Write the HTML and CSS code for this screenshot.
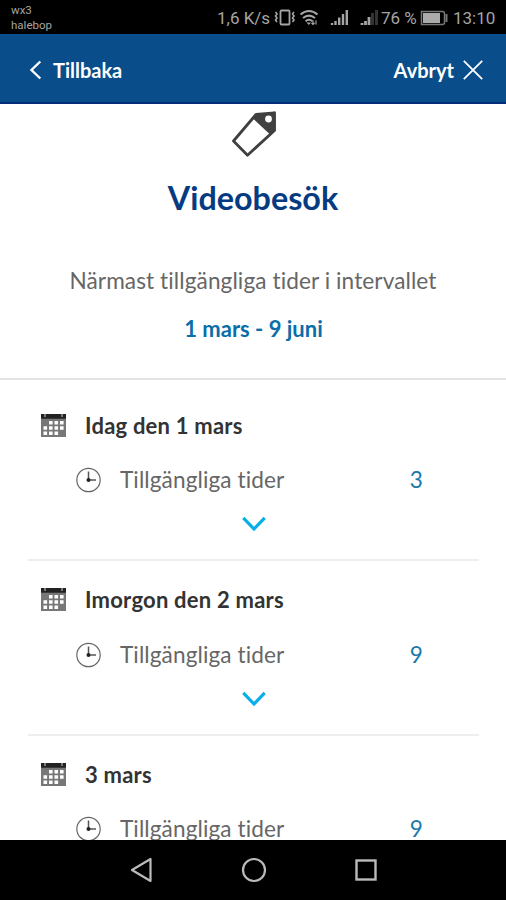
FILE: index.html
```
<!DOCTYPE html>
<html lang="sv">
<head>
<meta charset="utf-8">
<title>Videobesök</title>
<link rel="stylesheet" href="styles.css">
</head>
<body>
<svg class="defs" width="0" height="0">
  <symbol id="calendar" viewBox="0 0 25 23">
    <rect width="25" height="23" fill="#777"/>
    <rect width="25" height="4.7" fill="#222"/>
    <path d="M4 0v3M21 0v3" stroke="#999" stroke-width="1.5"/>
    <path d="M8 7h3.600v3.500H8zM13.500 7h3.600v3.500h-3.600zM19 7h3.600v3.500H19zM2.500 12.200h3.600v3.500H2.500zM8 12.200h3.600v3.500H8zM13.500 12.200h3.600v3.500h-3.600zM19 12.200h3.600v3.500H19zM2.500 17.400h3.600v3.500H2.500zM8 17.400h3.600v3.500H8zM13.500 17.400h3.600v3.500h-3.600z" fill="#fff"/>
  </symbol>
  <symbol id="clock" viewBox="0 0 26 26">
    <circle cx="13.500" cy="13" r="11.700" fill="none" stroke="#666" stroke-width="1.200"/>
    <path d="M13.500 4.500V13h7.500" fill="none" stroke="#555" stroke-width="1.500"/>
    <circle cx="13.500" cy="13" r="2" fill="#222"/>
  </symbol>
  <symbol id="chevron" viewBox="0 0 26 16">
    <path d="M2.300 1.800L13 13 23.700 1.800" fill="none" stroke="#08aee9" stroke-width="3.200"/>
  </symbol>
</svg>
<div class="screen">
  <div class="status">
    <div class="carrier">wx3<br>halebop</div>
    <span class="speed">1,6 K/s</span>
    <svg class="signals" width="105" height="22" viewBox="274 7 105 22" fill="none" stroke="#a5a5a5">
      <rect x="280.500" y="10.500" width="9" height="14" rx="1" stroke-width="1.800"/>
      <path d="M275.500 12l1.500 2-1.500 2 1.500 2-1.500 2 1.500 2M294 12l-1.500 2 1.500 2-1.500 2 1.500 2-1.500 2" stroke-width="1.600"/>
      <path d="M300.500 14.500q8.500-7 17 0M303 18q6-4.800 12 0M305.500 21.200q3.500-3 7 0" stroke-width="2"/>
      <path d="M306.500 22.500h4.500l-2.200 2.500z" fill="#a5a5a5" stroke="none"/>
      <path d="M313 20.500v4M311.500 23l1.500 1.500 1.500-1.500M316 24.500v-4" stroke-width="1.200"/>
      <path d="M332 25v-2M335.500 25v-4M339.200 25v-7.500M343 25v-11M346.800 25V10" stroke-width="2.400"/>
      <path d="M362 25v-2M365.500 25v-4M369 25v-8" stroke-width="2.800"/>
      <path d="M372.500 25V13M376.500 25V10" stroke="#333" stroke-width="3"/>
    </svg>
    <span class="percent">76 %</span>
    <svg class="battery" width="29" height="16" viewBox="0 0 29 16">
      <path d="M1.500 1.500h21q2 0 2 2v9q0 2-2 2h-21z" fill="none" stroke="#777" stroke-width="1.500"/>
      <rect x="3" y="3" width="17" height="10" fill="#aaa"/>
      <path d="M26.500 4v8" stroke="#777" stroke-width="2"/>
    </svg>
    <span class="time">13:10</span>
  </div>
  <div class="header">
    <div class="back">
      <svg width="13" height="20" viewBox="0 0 13 20"><path d="M11.300 1.500L2.500 10l8.800 8.500" fill="none" stroke="#fff" stroke-width="2.400"/></svg>
      <span>Tillbaka</span>
    </div>
    <div class="cancel">
      <span>Avbryt</span>
      <svg width="20" height="20" viewBox="0 0 20 20"><path d="M.8.8l18.400 18.400M19.200.8L.8 19.200" stroke="#fff" stroke-width="1.800"/></svg>
    </div>
  </div>
  <div class="content">
    <div class="intro">
      <svg class="tag" width="46" height="48" viewBox="0 0 46 48">
        <path d="M25 4.500L43.500 3V20.500L16.500 45.200 2.500 31z" fill="#fff" stroke="#404040" stroke-width="2.800" stroke-linejoin="round"/>
        <path d="M25 5L44.500 1.500V20.500L38.500 24 22.500 9z" fill="#404040"/>
        <circle cx="37.500" cy="9" r="3.400" fill="#fff"/>
      </svg>
      <h1>Videobesök</h1>
      <p class="lead">Närmast tillgängliga tider i intervallet</p>
      <p class="range">1 mars - 9 juni</p>
    </div>
    <div class="days">
      <div class="day">
        <div class="date"><svg class="cal"><use href="#calendar"/></svg><span>Idag den 1 mars</span></div>
        <div class="slots"><svg class="clock"><use href="#clock"/></svg><span>Tillgängliga tider</span><span class="count">3</span></div>
        <svg class="chevron"><use href="#chevron"/></svg>
      </div>
      <div class="day">
        <div class="date"><svg class="cal"><use href="#calendar"/></svg><span>Imorgon den 2 mars</span></div>
        <div class="slots"><svg class="clock"><use href="#clock"/></svg><span>Tillgängliga tider</span><span class="count">9</span></div>
        <svg class="chevron"><use href="#chevron"/></svg>
      </div>
      <div class="day">
        <div class="date"><svg class="cal"><use href="#calendar"/></svg><span>3 mars</span></div>
        <div class="slots"><svg class="clock"><use href="#clock"/></svg><span>Tillgängliga tider</span><span class="count">9</span></div>
      </div>
    </div>
  </div>
  <div class="navbar">
    <svg width="24" height="26" viewBox="0 0 24 26"><path d="M20.500 2v22L2 13z" fill="none" stroke="#bbb" stroke-width="2.200" stroke-linejoin="round"/></svg>
    <svg width="26" height="26" viewBox="0 0 26 26"><circle cx="13" cy="13" r="11" fill="none" stroke="#bbb" stroke-width="2.200"/></svg>
    <svg width="22" height="22" viewBox="0 0 22 22"><rect x="1.500" y="1.500" width="19" height="19" fill="none" stroke="#bbb" stroke-width="2.400"/></svg>
  </div>
</div>
</body>
</html>
```
FILE: styles.css
```
* { box-sizing: border-box; }
body { margin: 0; background: #fff; font-family: Lato, sans-serif; font-variant-ligatures: none; }
svg { display: block; flex: none; }
.defs { position: absolute; }
.screen { width: 506px; height: 900px; display: flex; flex-direction: column; overflow: hidden; }
.status { height: 34px; flex: none; background: #000; color: #a5a5a5; display: flex; align-items: center; padding: 2px 0 0 11px; font-family: Roboto, sans-serif; font-size: 17px; line-height: 30px; white-space: nowrap; }
.carrier { width: 206px; font-size: 11.500px; line-height: 15px; }
.speed { width: 57px; }
.signals { margin-right: 2px; }
.percent { width: 39px; }
.battery { margin-right: 4px; }
.header { height: 70px; flex: none; background: #094d8a; border-bottom: 2px solid #062b78; display: flex; justify-content: space-between; align-items: center; padding: 4px 23px 0 29px; color: #fff; font-weight: 700; font-size: 20px; line-height: 24px; }
.back, .cancel { display: flex; align-items: center; }
.back { gap: 11px; }
.cancel { gap: 9px; }
.content { height: 736px; flex: none; overflow: hidden; }
.intro { height: 276px; border-bottom: 2px solid #e4e4e4; display: flex; flex-direction: column; align-items: center; padding-top: 6px; }
.tag { margin-left: 1px; }
h1 { margin: 20px 0 0; color: #063b82; font-size: 32.300px; line-height: 40px; font-weight: 700; }
.lead { margin: 48px 0 0; color: #666; font-size: 22.600px; letter-spacing: .1px; line-height: 30px; }
.range { margin: 18px 0 0; padding-left: 1px; color: #0a6ea8; font-size: 22px; line-height: 30px; font-weight: 700; }
.days { padding: 0 27px 0 28px; }
.day { height: 174.500px; border-bottom: 2px solid #eee; padding-top: 30px; }
.day:first-child { height: 181px; }
.date { height: 30px; display: flex; align-items: center; gap: 19px; padding-left: 13px; color: #333; font-size: 22px; letter-spacing: .22px; font-weight: 700; }
.day + .day { padding-top: 23.500px; }
.cal { width: 25px; height: 23px; }
.slots { height: 30px; margin-top: 25px; display: flex; align-items: center; padding-left: 47px; color: #666; font-size: 22.600px; letter-spacing: .1px; line-height: 28px; }
.clock { width: 26px; height: 26px; margin-right: 19px; }
.count { margin-left: auto; margin-right: 56px; color: #1b79aa; }
.chevron { width: 26px; height: 16px; margin: 21px auto 0; }
.navbar { height: 60px; flex: none; background: #000; display: flex; align-items: center; padding-left: 130px; }
.navbar svg:nth-child(2) { margin: 0 88px 0 87px; }
```
